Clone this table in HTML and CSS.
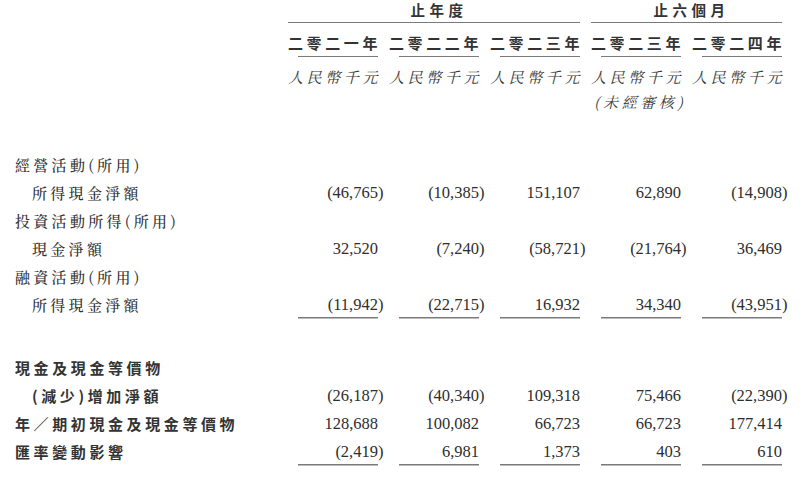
FILE: index.html
```html
<!DOCTYPE html>
<html lang="zh-Hant">
<head>
<meta charset="utf-8">
<link rel="stylesheet" href="styles.css">
</head>
<body>
<div class="sheet">
  <div class="row head1">
    <div></div>
    <div class="grp span3">止年度</div>
    <div class="grp span2">止六個月</div>
  </div>
  <div class="row years">
    <div></div>
    <div class="yr">二零二一年</div>
    <div class="yr">二零二二年</div>
    <div class="yr">二零二三年</div>
    <div class="yr">二零二三年</div>
    <div class="yr">二零二四年</div>
  </div>
  <div class="row cur">
    <div></div>
    <div class="ccy">人民幣千元</div>
    <div class="ccy">人民幣千元</div>
    <div class="ccy">人民幣千元</div>
    <div class="ccy">人民幣千元</div>
    <div class="ccy">人民幣千元</div>
  </div>
  <div class="row note">
    <div></div><div></div><div></div><div></div>
    <div class="ccy center">(未經審核)</div>
    <div></div>
  </div>

  <div class="sec1">
    <div class="row line"><div class="lbl">經營活動(所用)</div></div>
    <div class="row line">
      <div class="lbl ind">所得現金淨額</div>
      <div class="n"><span class="neg">(46,765)</span></div>
      <div class="n"><span class="neg">(10,385)</span></div>
      <div class="n"><span>151,107</span></div>
      <div class="n"><span>62,890</span></div>
      <div class="n"><span class="neg">(14,908)</span></div>
    </div>
    <div class="row line"><div class="lbl">投資活動所得(所用)</div></div>
    <div class="row line">
      <div class="lbl ind">現金淨額</div>
      <div class="n"><span>32,520</span></div>
      <div class="n"><span class="neg">(7,240)</span></div>
      <div class="n"><span class="neg">(58,721)</span></div>
      <div class="n"><span class="neg">(21,764)</span></div>
      <div class="n"><span>36,469</span></div>
    </div>
    <div class="row line"><div class="lbl">融資活動(所用)</div></div>
    <div class="row line">
      <div class="lbl ind">所得現金淨額</div>
      <div class="n ul"><span class="neg">(11,942)</span></div>
      <div class="n ul"><span class="neg">(22,715)</span></div>
      <div class="n ul"><span>16,932</span></div>
      <div class="n ul"><span>34,340</span></div>
      <div class="n ul"><span class="neg">(43,951)</span></div>
    </div>
  </div>

  <div class="sec2">
    <div class="row line"><div class="lbl b">現金及現金等價物</div></div>
    <div class="row line">
      <div class="lbl b ind">(減少)增加淨額</div>
      <div class="n"><span class="neg">(26,187)</span></div>
      <div class="n"><span class="neg">(40,340)</span></div>
      <div class="n"><span>109,318</span></div>
      <div class="n"><span>75,466</span></div>
      <div class="n"><span class="neg">(22,390)</span></div>
    </div>
    <div class="row line">
      <div class="lbl b">年／期初現金及現金等價物</div>
      <div class="n"><span>128,688</span></div>
      <div class="n"><span>100,082</span></div>
      <div class="n"><span>66,723</span></div>
      <div class="n"><span>66,723</span></div>
      <div class="n"><span>177,414</span></div>
    </div>
    <div class="row line">
      <div class="lbl b">匯率變動影響</div>
      <div class="n ul"><span class="neg">(2,419)</span></div>
      <div class="n ul"><span>6,981</span></div>
      <div class="n ul"><span>1,373</span></div>
      <div class="n ul"><span>403</span></div>
      <div class="n ul"><span>610</span></div>
    </div>
  </div>
</div>
</body>
</html>
```

FILE: styles.css
```css
html, body {
  margin: 0;
  padding: 0;
  background: #ffffff;
}

body {
  color: #333333;
  font-family: "Noto Sans CJK TC", sans-serif;
}

.sheet {
  width: 800px;
  box-sizing: border-box;
  padding-left: 15px;
}

.row {
  display: grid;
  grid-template-columns: 262px repeat(5, 90px);
  column-gap: 11px;
}

/* header group titles */
.grp {
  font-family: "Noto Sans CJK TC", sans-serif;
  font-weight: 700;
  font-size: 14.5px;
  letter-spacing: 4.5px;
  line-height: 20px;
  height: 21.5px;
  padding-left: 10px;
  text-align: center;
  border-bottom: 1.5px solid #7a7a7a;
  color: #333;
}

.span3 { grid-column: span 3; }
.span2 { grid-column: span 2; }

.yr {
  font-family: "Noto Sans CJK TC", sans-serif;
  font-weight: 700;
  font-size: 15px;
  letter-spacing: 3.6px;
  line-height: 20px;
  padding-top: 10px;
  padding-bottom: 4.5px;
  white-space: nowrap;
  color: #333;
  background: linear-gradient(#7a7a7a, #7a7a7a) no-repeat right bottom / 80px 1.5px;
}

.cur {
  margin-top: 10px;
}

.note {
  margin-top: 5px;
}

.ccy {
  font-family: "Noto Serif CJK TC", "Noto Sans CJK TC", sans-serif;
  font-style: italic;
  font-size: 15px;
  letter-spacing: 3.6px;
  line-height: 20px;
  color: #3a3a3a;
  white-space: nowrap;
}

.center {
  text-align: center;
  padding-left: 3px;
}

.sec1 {
  margin-top: 38.5px;
}

.sec2 {
  margin-top: 35px;
}

.line {
  line-height: 28px;
  height: 28px;
}

.lbl {
  font-family: "Noto Serif CJK TC", "Noto Sans CJK TC", sans-serif;
  font-weight: 500;
  font-size: 15px;
  letter-spacing: 3.3px;
  white-space: nowrap;
  color: #333;
}

.ind {
  padding-left: 17px;
}

.b {
  font-family: "Noto Sans CJK TC", sans-serif;
  font-weight: 700;
  letter-spacing: 3.6px;
}

.n {
  font-family: "Liberation Serif", "Times New Roman", serif;
  font-size: 16.5px;
  text-align: right;
  color: #2e2e2e;
  white-space: nowrap;
}

.neg {
  margin-right: -5.5px;
}

.ul {
  background: linear-gradient(#7a7a7a, #7a7a7a) no-repeat right bottom / 80px 1.5px;
}
```
